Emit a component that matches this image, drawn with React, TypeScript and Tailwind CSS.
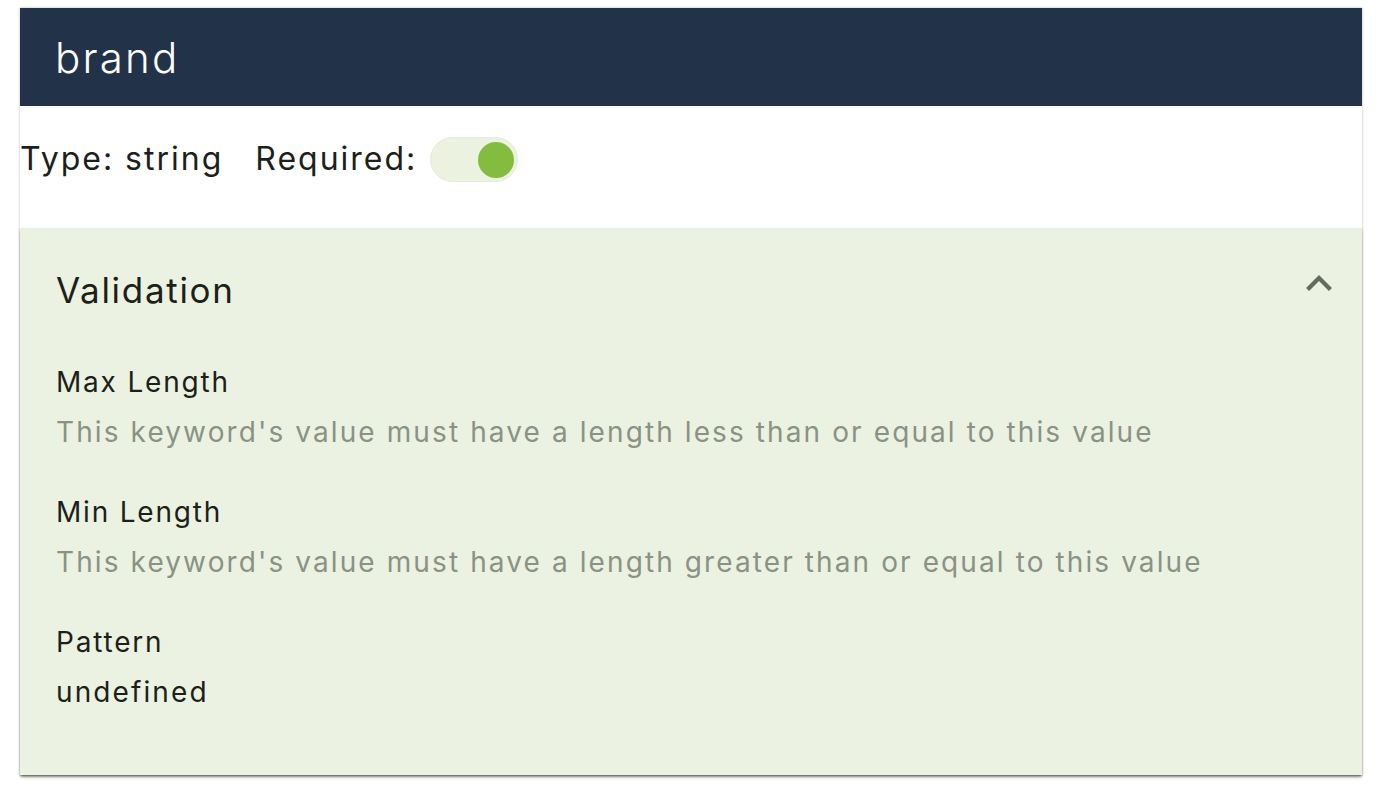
import React from "react";

const font = { fontFamily: "Inter, 'Open Sans', sans-serif" };

function Field({ label, desc, dark }: { label: string; desc: string; dark?: boolean }) {
  return (
    <div className="flex flex-col">
      <div className="text-[28px] leading-[50px] tracking-[1.8px] text-[#1c1f1a]">{label}</div>
      <div className={`text-[28px] leading-[50px] tracking-[2.1px] ${dark ? "text-[#1c1f1a]" : "text-[#8a9285]"}`}>{desc}</div>
    </div>
  );
}

export default function App() {
  return (
    <div className="w-[1384px] h-[796px] bg-white pt-[7px] px-[20px]" style={font}>
      <div className="w-[1342px] bg-white shadow-[0_1px_3px_rgba(0,0,0,0.2),0_1px_1px_rgba(0,0,0,0.14)] border-t border-[#e3e5ea]">
        <div className="h-[98px] bg-[#223249] flex items-center pl-[35px]">
          <span className="text-[42px] font-light text-white tracking-[2.2px]">brand</span>
        </div>
        <div className="h-[122px] flex items-start pt-[31px]">
          <span className="text-[32px] leading-[44px] tracking-[2px] text-[#1c1f1a]">Type: string</span>
          <span className="text-[32px] leading-[44px] tracking-[2px] text-[#1c1f1a] ml-[32px]">Required:</span>
          <div className="ml-[13px] w-[88px] h-[45px] rounded-full bg-[#ebf2e0] flex items-center justify-end pr-[3px] border border-[#e4edd6]">
            <div className="w-[36px] h-[36px] rounded-full bg-[#84bc3f]" />
          </div>
        </div>
        <div className="bg-[#ecf2e1] shadow-[0_3px_3px_-1px_rgba(0,0,0,0.35),0_1px_2px_rgba(0,0,0,0.2)] h-[547px] px-[36px]">
          <div className="h-[124px] flex items-center justify-between">
            <span className="text-[35px] tracking-[1.7px] text-[#1c1f1a]">Validation</span>
            <svg width="26" height="16" viewBox="6 8 12 7.41" className="mr-[-6px] mb-[14px]">
              <path d="M12 8l-6 6 1.41 1.41L12 10.83l4.59 4.58L18 14z" fill="#646c60" />
            </svg>
          </div>
          <div className="flex flex-col gap-[30px] mt-[5px]">
            <Field label="Max Length" desc="This keyword's value must have a length less than or equal to this value" />
            <Field label="Min Length" desc="This keyword's value must have a length greater than or equal to this value" />
            <Field label="Pattern" desc="undefined" dark />
          </div>
        </div>
      </div>
    </div>
  );
}
